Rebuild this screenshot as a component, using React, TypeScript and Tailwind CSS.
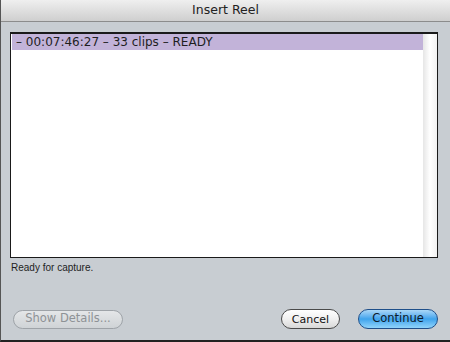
import React from "react";

export default function App() {
  const font = { fontFamily: '"DejaVu Sans", "Liberation Sans", sans-serif' };
  return (
    <div
      className="w-[450px] h-[342px] flex flex-col bg-[#c8cdd2] border-l border-l-[#555] border-b-2 border-b-[#222] overflow-hidden"
      style={font}
    >
      {/* Title bar */}
      <div className="h-[22px] shrink-0 flex items-center justify-center bg-gradient-to-b from-[#efefef] to-[#cfcfcf] border-b border-[#8c8c8c]">
        <span className="text-[12.5px] text-[#222] leading-none">Insert Reel</span>
      </div>

      {/* Body */}
      <div className="flex-1 flex flex-col pl-[9px] pr-[12px] pt-[10px]">
        {/* List box */}
        <div className="h-[226px] flex border border-[#1a1a1a] border-t-2 bg-white">
          <div className="flex-1 flex flex-col pl-[1px]">
            <div className="h-[16px] bg-[#c2b3d9] flex items-center pl-[4px]">
              <span className="text-[12px] text-[#1e1e1e] leading-none">– 00:07:46:27 – 33 clips – READY</span>
            </div>
          </div>
          <div className="w-[14px] bg-gradient-to-r from-[#e6e6e6] via-[#ffffff] to-[#f2f2f2]" />
        </div>

        {/* Status */}
        <div className="mt-[5px] text-[10px] text-[#1e1e1e] leading-none pl-[1px]" style={{ fontFamily: '"Liberation Sans", sans-serif' }}>
          Ready for capture.
        </div>

        {/* Buttons */}
        <div className="mt-auto mb-[11px] flex items-center">
          <div className="ml-[3px] w-[110px] h-[19px] rounded-full border border-[#9ea3a8] bg-gradient-to-b from-[#e4e6e8] to-[#cfd3d6] flex items-center justify-center">
            <span className="text-[11.5px] text-[#8e9296] leading-none">Show Details...</span>
          </div>
          <div className="ml-auto w-[59px] h-[20px] rounded-full border border-[#4a4a4a] bg-gradient-to-b from-[#ffffff] via-[#f0f0f0] to-[#d8d8d8] flex items-center justify-center">
            <span className="text-[11px] text-[#111] leading-none">Cancel</span>
          </div>
          <div className="ml-[18px] w-[80px] h-[20px] rounded-full border border-[#1f4f8a] bg-gradient-to-b from-[#a9d7f7] via-[#3ea3ec] to-[#8fd4fb] flex items-center justify-center">
            <span className="text-[11.5px] text-[#0c1a2a] leading-none">Continue</span>
          </div>
        </div>
      </div>
    </div>
  );
}
